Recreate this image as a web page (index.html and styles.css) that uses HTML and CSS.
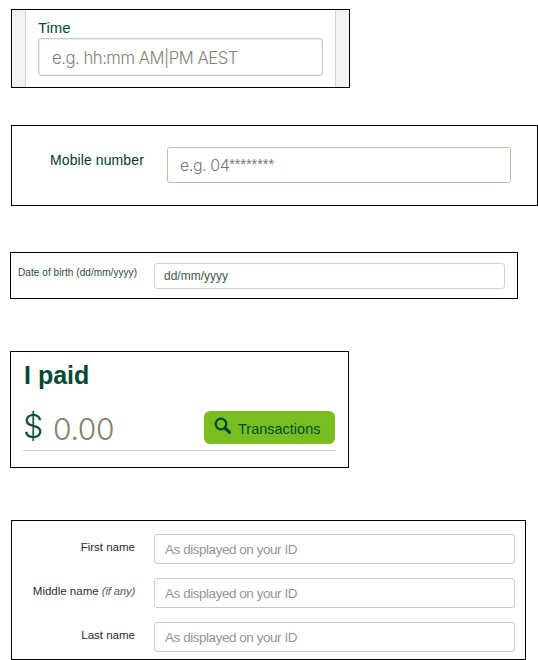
FILE: index.html
```html
<!DOCTYPE html>
<html lang="en">
<head>
<meta charset="utf-8">
<title>Form field examples</title>
<link rel="stylesheet" href="styles.css">
</head>
<body>
<section class="panel time-panel">
  <div class="time-body">
    <div class="time-label"><span>Time</span></div>
    <div class="field time-field"><span>e.g. hh:mm AM|PM AEST</span></div>
  </div>
</section>
<section class="panel mobile-panel">
  <div class="mobile-label"><span>Mobile number</span></div>
  <div class="field mobile-field"><span>e.g. 04<span class="mask">********</span></span></div>
</section>
<section class="panel birth-panel">
  <div class="birth-label"><span>Date of birth (dd/mm/yyyy)</span></div>
  <div class="field birth-field"><span>dd/mm/yyyy</span></div>
</section>
<section class="panel paid-panel">
  <h2><span>I paid</span></h2>
  <div class="amount-row">
    <span class="currency">$</span>
    <span class="amount">0.00</span>
    <div class="button">
      <svg width="18" height="18" viewBox="0 0 18 18" fill="none" stroke="#004b35"><circle cx="7" cy="7" r="5.3" stroke-width="2.3"/><path d="M11 11 15.5 15.3" stroke-width="3.2" stroke-linecap="round"/></svg>
      <span>Transactions</span>
    </div>
  </div>
</section>
<section class="panel names-panel">
  <div class="name-row"><div class="name-label">First name</div><div class="field name-field"><span>As displayed on your ID</span></div></div>
  <div class="name-row"><div class="name-label">Middle name <em>(if any)</em></div><div class="field name-field"><span>As displayed on your ID</span></div></div>
  <div class="name-row"><div class="name-label">Last name</div><div class="field name-field"><span>As displayed on your ID</span></div></div>
</section>
</body>
</html>
```
FILE: styles.css
```css
* { box-sizing: border-box; }
body {
  margin: 0;
  padding-top: 9px;
  height: 660px;
  overflow: hidden;
  background: #fff;
  font-family: "Liberation Sans", Arial, sans-serif;
  white-space: nowrap;
}
.panel { border: 1px solid #000; background: #fff; }
.field { display: flex; align-items: center; border: 1px solid #d3d3ca; border-radius: 3px; background: #fff; }

.time-panel { width: 339px; height: 79px; margin-left: 11px; padding: 0 13px; background: #f3f3f2; }
.time-body { height: 77px; padding: 10px 12px 0; background: #fff; border: solid #d2d2d0; border-width: 0 1px; }
.time-label { height: 18px; font-size: 15px; line-height: 15px; letter-spacing: -0.1px; color: #004b35; }
.time-field { height: 38px; width: 285px; padding-left: 13px; border-color: #cdcdc5; box-shadow: inset 0 0 0 1px #eeeeea; font: 300 16.7px Inter, sans-serif; letter-spacing: -0.48px; color: #838375; }
.time-field span { padding-top: 2px; }

.mobile-panel { display: flex; width: 527px; height: 81px; margin: 37px 0 0 11px; padding: 21px 0 0 38px; }
.mobile-label { width: 117px; padding-top: 5px; font-size: 14px; line-height: 17px; letter-spacing: 0.1px; color: #003b2b; }
.mobile-field { width: 344px; height: 36px; padding-left: 12px; border-color: #bfbfad; font: 300 16px Inter, sans-serif; letter-spacing: -0.45px; color: #77776d; }
.mask { font: 14.5px/10px "Liberation Sans", sans-serif; letter-spacing: -0.05px; vertical-align: 2px; }

.birth-panel { display: flex; width: 508px; height: 47px; margin: 46px 0 0 10px; padding: 10px 0 0 7px; }
.birth-label { width: 136px; padding-top: 3px; font-size: 10px; line-height: 14px; letter-spacing: 0.07px; color: #294c3e; }
.birth-field { width: 351px; height: 26px; padding-left: 9px; border-color: #d4d4c6; font-size: 12px; color: #48584f; }

.paid-panel { width: 339px; height: 117px; margin: 52px 0 0 10px; padding: 9px 13px 0; }
.paid-panel h2 { margin: 0; font-size: 25px; line-height: 29px; color: #004b35; }
.amount-row { display: flex; align-items: center; height: 48px; margin: 13px 0 0 -1px; padding-top: 1px; width: 313px; border-bottom: 1px solid #cacaca; font: 300 30px Inter, sans-serif; }
.currency { width: 30px; padding-bottom: 1px; color: #004b35; font-size: 32px; line-height: 36px; letter-spacing: -1px; }
.amount { padding-top: 3px; color: #858272; letter-spacing: -0.3px; }
.button { display: flex; align-items: center; width: 131px; height: 33px; margin: 0 1px 0 auto; padding-left: 10px; gap: 6px; border-radius: 6px; background: #79be20; color: #004b35; font: 14.5px "Liberation Sans", sans-serif; }
.button svg { margin-bottom: 2px; }
.button span { padding-top: 3px; }

.names-panel { width: 515px; height: 140px; margin: 52px 0 0 11px; padding-top: 13px; }
.name-row { display: flex; height: 44px; }
.name-label { width: 123px; margin-right: 19px; padding-top: 6px; font-size: 11.5px; line-height: 14px; text-align: right; color: #252d35; }
.name-label em { color: #555f5b; letter-spacing: -0.25px; }
.name-field { width: 361px; height: 30px; padding-left: 10px; border-color: #ceccc6; font-size: 13.5px; letter-spacing: -0.46px; color: #92969a; }
```
